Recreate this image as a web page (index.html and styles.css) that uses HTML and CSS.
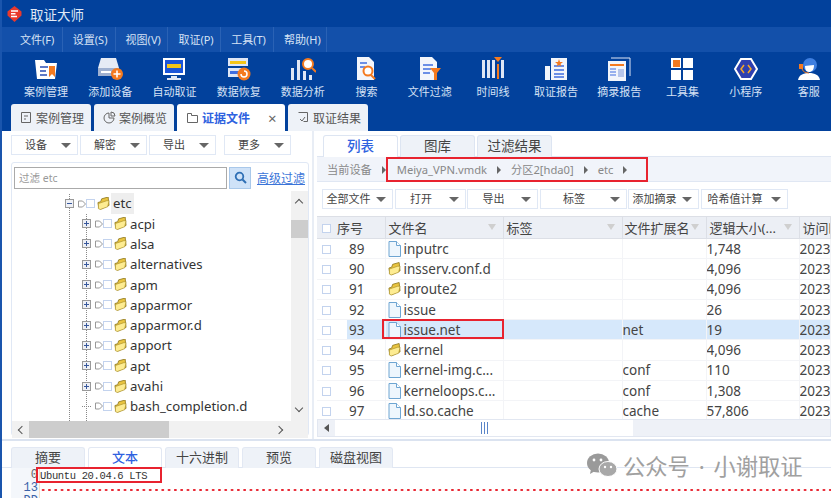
FILE: index.html
```html
<!DOCTYPE html>
<html lang="zh">
<head>
    <meta charset="UTF-8">
    <title>取证大师</title>
    <link rel="stylesheet" href="styles.css">
</head>
<body>
    <svg class="defs" width="0" height="0">
        <symbol id="folder" viewBox="0 0 14 14">
            <path d="M1 6l3-1 1-3 7-2 1 9-9 4-2-1z" fill="#e9c440" stroke="#8f7a22" stroke-width=".9"/>
            <path d="M1.500 7l9-3 2.500 0-1.500 6.500-8 3-2-1z" fill="#fdec92" stroke="#a88e28" stroke-width=".7"/>
        </symbol>
        <symbol id="file" viewBox="0 0 13 16">
            <path d="M1 .5h7.500l4 4v11h-11.500z" fill="#eef6fd" stroke="#6ea5d2"/>
            <path d="M8.500 .5v4h4" fill="#fff" stroke="#6ea5d2"/>
        </symbol>
        <symbol id="tag" viewBox="0 0 8 8">
            <path d="M.5 1h4l3 3-3 3h-4z" fill="#fff" stroke="#999"/>
        </symbol>
    </svg>

    <header class="titlebar">
        <svg class="logo" width="15" height="16" viewBox="0 0 15 16">
            <path d="M7.500 0l7 5.500v4l-7 6.500-7-6.500v-4z" fill="#e8392d"/>
            <path d="M4 5h7M4 7.800h4.500M4 10.500h6" stroke="#fff" stroke-width="1.400"/>
        </svg>
        <span>取证大师</span>
    </header>

    <nav class="menubar">
        <span class="menu-item">文件(F)</span>
        <span class="menu-item">设置(S)</span>
        <span class="menu-item">视图(V)</span>
        <span class="menu-item">取证(P)</span>
        <span class="menu-item">工具(T)</span>
        <span class="menu-item">帮助(H)</span>
    </nav>

    <div class="toolbar">
        <div class="tool">
            <svg width="26" height="24" viewBox="0 0 26 24"><path d="M2 3h9l2 3h11l-2 16H4z" fill="#fff"/><path d="M7 10h8M7 14h6M7 18h7" stroke="#2b4fb5" stroke-width="1.500"/><path d="M16 9h6v11l-3-3-3 3z" fill="#f47a1f"/></svg>
            <span>案例管理</span>
        </div>
        <div class="tool">
            <svg width="28" height="24" viewBox="0 0 28 24"><path d="M5 1h15l3 10H2z" fill="#e6ebf5"/><path d="M2 11h21v8H2z" fill="#9fb0d0"/><path d="M5 15h10" stroke="#fff" stroke-width="2"/><circle cx="21" cy="17" r="6" fill="#f47a1f"/><path d="M21 13.500v7M17.500 17h7" stroke="#fff" stroke-width="1.600"/></svg>
            <span>添加设备</span>
        </div>
        <div class="tool">
            <svg width="24" height="24" viewBox="0 0 24 24"><path d="M1 1h22v17H1z" fill="#fff"/><path d="M3 3h18v13H3z" fill="#1b55d8"/><path d="M5 7h14v4H5z" fill="#f5c518"/><path d="M9 19h6v2h4v2H5v-2h4z" fill="#dfe6f5"/></svg>
            <span>自动取证</span>
        </div>
        <div class="tool">
            <svg width="24" height="24" viewBox="0 0 24 24"><path d="M1 1h20v8H1zM1 11h14v9H1z" fill="#dfe6f5"/><path d="M3 4h16v3H3z" fill="#f5c518"/><path d="M3 14h9v3H3z" fill="#3f6de0"/><circle cx="17" cy="17" r="6.500" fill="#f47a1f"/><path d="M14 17a3 3 0 1 0 3-3" fill="none" stroke="#fff" stroke-width="1.500"/></svg>
            <span>数据恢复</span>
        </div>
        <div class="tool">
            <svg width="26" height="24" viewBox="0 0 26 24"><path d="M1 11h3v12H1zM7 3h3v20H7zM13 14h3v9h-3zM19 18h3v5h-3z" fill="#dfe6f5"/><circle cx="18" cy="7" r="5" fill="#fff" stroke="#f47a1f" stroke-width="2"/><path d="M22 11l4 4" stroke="#f47a1f" stroke-width="2"/></svg>
            <span>数据分析</span>
        </div>
        <div class="tool">
            <svg width="22" height="24" viewBox="0 0 22 24"><path d="M1 0h12l5 5v18H1z" fill="#f2f5fb"/><path d="M4 6h7M4 10h5" stroke="#3f6de0" stroke-width="1.500"/><circle cx="12" cy="14" r="4.500" fill="#fff" stroke="#f47a1f" stroke-width="2"/><path d="M15 18l4 4" stroke="#f47a1f" stroke-width="2"/></svg>
            <span>搜索</span>
        </div>
        <div class="tool">
            <svg width="24" height="24" viewBox="0 0 24 24"><path d="M2 0h12l5 5v18H2z" fill="#f2f5fb"/><path d="M5 8h10M5 12h8M5 16h7" stroke="#3f6de0" stroke-width="1.500"/><path d="M12 11h11l-4 5v7h-3v-7z" fill="#f47a1f"/></svg>
            <span>文件过滤</span>
        </div>
        <div class="tool">
            <svg width="24" height="24" viewBox="0 0 24 24"><path d="M1 3h3v18H1zM6 3h3v18H6zM11 3h3v18h-3zM20 3h3v18h-3z" fill="#dfe6f5"/><path d="M16 7h2v15h-2z" fill="#f47a1f"/><path d="M13 0h8l-4 5z" fill="#f47a1f"/></svg>
            <span>时间线</span>
        </div>
        <div class="tool">
            <svg width="24" height="24" viewBox="0 0 24 24"><path d="M7 1h16v22H7zM1 9h5v14H1z" fill="#f2f5fb"/><path d="M10 9h10M10 13h10M10 17h10M10 20h10" stroke="#3f6de0" stroke-width="1.300"/><path d="M15 2l1 3h3l-2.500 2 1 2.500-2.500-1.500-2.500 1.500 1-2.500L11 5h3z" fill="#f47a1f"/></svg>
            <span>取证报告</span>
        </div>
        <div class="tool">
            <svg width="24" height="24" viewBox="0 0 24 24"><path d="M1 4h18v20H1z" fill="#f2f5fb"/><path d="M4 1h19v18" fill="none" stroke="#dfe6f5"/><path d="M3 7h14v2H3z" fill="#f47a1f"/><path d="M3 12h6M3 15h6M3 18h6" stroke="#3f6de0"/><path d="M11 12h6v8h-6z" fill="#b7c6ea"/></svg>
            <span>摘录报告</span>
        </div>
        <div class="tool">
            <svg width="22" height="22" viewBox="0 0 22 22"><path d="M0 0h10v10H0z" fill="#fff"/><path d="M2 2h7v7H2z" fill="#f47a1f"/><path d="M12 0h10v10H12zM0 12h10v10H0zM12 12h10v10H12z" fill="#fff"/></svg>
            <span>工具集</span>
        </div>
        <div class="tool">
            <svg width="24" height="24" viewBox="0 0 24 24"><path d="M7 2h10l6 10-6 10H7L1 12z" fill="#2e3fb0" stroke="#fff" stroke-width="2"/><path d="M10 8l-3 4 3 4M14 8l3 4-3 4" fill="none" stroke="#f5a623" stroke-width="1.500"/></svg>
            <span>小程序</span>
        </div>
        <div class="tool">
            <svg width="24" height="24" viewBox="0 0 24 24"><circle cx="13" cy="8" r="7" fill="#3f7fe0"/><path d="M8 9c2 0 6-1 9-1 0 5-2 7-5 7s-4-3-4-6z" fill="#fff"/><path d="M1 23c1-5 5-7 11-7s10 2 11 7z" fill="#fff"/><path d="M2 7h4v5H2z" fill="#f47a1f"/><path d="M5 12c1 3 4 4 7 4" fill="none" stroke="#f47a1f"/></svg>
            <span>客服</span>
        </div>
    </div>

    <div class="main-tabs">
        <div class="main-tab"><svg width="13" height="13" viewBox="0 0 13 13"><path d="M1.500 1.500h9v10h-9zM4 5h4M4 8h2" fill="none" stroke="#666"/></svg>案例管理</div>
        <div class="main-tab"><svg width="13" height="13" viewBox="0 0 13 13"><path d="M6 2a5 5 0 1 0 5 5H6zM8 1v4h4a4 4 0 0 0-4-4z" fill="none" stroke="#666"/></svg>案例概览</div>
        <div class="main-tab main-tab-active"><svg width="13" height="13" viewBox="0 0 13 13"><path d="M1.500 2.500h4v2h6v7h-10z" fill="none" stroke="#666"/></svg><span>证据文件</span><i class="close">×</i></div>
        <div class="main-tab"><svg width="13" height="13" viewBox="0 0 13 13"><path d="M1.500 1.500h9v9h-4M3 8l2 2 3-4" fill="none" stroke="#666"/></svg>取证结果</div>
    </div>

    <div class="workspace">
        <section class="left-pane">
            <div class="btn-row">
                <div class="drop drop-wide">设备</div>
                <div class="drop drop-wide">解密</div>
                <div class="drop drop-wide">导出</div>
                <div class="drop drop-wide drop-gap">更多</div>
            </div>
            <div class="tree-panel">
                <div class="filter-row">
                    <div class="filter-input">过滤 etc</div>
                    <div class="filter-btn">
                        <svg width="13" height="13" viewBox="0 0 13 13"><circle cx="5.500" cy="5.500" r="3.800" fill="none" stroke="#2f6fb5" stroke-width="1.800"/><path d="M8.500 8.500l3.500 3.500" stroke="#2f6fb5" stroke-width="2"/></svg>
                    </div>
                    <a class="filter-link">高级过滤</a>
                </div>
                <div class="tree-wrap">
                    <div class="tree">
                        <div class="branch">
                            <div class="node node-root">
                                <i class="expander minus"></i><svg class="tag"><use href="#tag"/></svg><i class="check"></i><svg class="folder"><use href="#folder"/></svg><span class="node-label current">etc</span>
                            </div>
                            <div class="branch branch-inner">
                                <div class="node"><i class="expander"></i><svg class="tag"><use href="#tag"/></svg><i class="check"></i><svg class="folder"><use href="#folder"/></svg><span class="node-label">acpi</span></div>
                                <div class="node"><i class="expander"></i><svg class="tag"><use href="#tag"/></svg><i class="check"></i><svg class="folder"><use href="#folder"/></svg><span class="node-label">alsa</span></div>
                                <div class="node"><i class="expander"></i><svg class="tag"><use href="#tag"/></svg><i class="check"></i><svg class="folder"><use href="#folder"/></svg><span class="node-label">alternatives</span></div>
                                <div class="node"><i class="expander"></i><svg class="tag"><use href="#tag"/></svg><i class="check"></i><svg class="folder"><use href="#folder"/></svg><span class="node-label">apm</span></div>
                                <div class="node"><i class="expander"></i><svg class="tag"><use href="#tag"/></svg><i class="check"></i><svg class="folder"><use href="#folder"/></svg><span class="node-label">apparmor</span></div>
                                <div class="node"><i class="expander"></i><svg class="tag"><use href="#tag"/></svg><i class="check"></i><svg class="folder"><use href="#folder"/></svg><span class="node-label">apparmor.d</span></div>
                                <div class="node"><i class="expander"></i><svg class="tag"><use href="#tag"/></svg><i class="check"></i><svg class="folder"><use href="#folder"/></svg><span class="node-label">apport</span></div>
                                <div class="node"><i class="expander"></i><svg class="tag"><use href="#tag"/></svg><i class="check"></i><svg class="folder"><use href="#folder"/></svg><span class="node-label">apt</span></div>
                                <div class="node"><i class="expander"></i><svg class="tag"><use href="#tag"/></svg><i class="check"></i><svg class="folder"><use href="#folder"/></svg><span class="node-label">avahi</span></div>
                                <div class="node"><i class="connector"></i><svg class="tag"><use href="#tag"/></svg><i class="check"></i><svg class="folder"><use href="#folder"/></svg><span class="node-label">bash_completion.d</span></div>
                            </div>
                        </div>
                    </div>
                    <div class="vscroll">
                        <i class="chev chev-up"></i>
                        <i class="vthumb"></i>
                        <i class="chev chev-down"></i>
                    </div>
                </div>
                <div class="hscroll">
                    <i class="chev chev-left"></i><i class="hthumb"></i><i class="chev chev-right"></i>
                </div>
            </div>
        </section>

        <section class="right-pane">
            <div class="sub-tabs">
                <div class="sub-tab sub-tab-active">列表</div>
                <div class="sub-tab">图库</div>
                <div class="sub-tab">过滤结果</div>
            </div>
            <div class="crumbs">
                <span class="crumb crumb-first">当前设备</span>
                <span class="crumb">Meiya_VPN.vmdk</span>
                <span class="crumb">分区2[hda0]</span>
                <span class="crumb">etc</span>
                <div class="red-box crumb-mark"></div>
            </div>
            <div class="btn-row file-btns">
                <div class="drop w71">全部文件</div>
                <div class="drop w71">打开</div>
                <div class="drop w71">导出</div>
                <div class="drop w87">标签</div>
                <div class="drop w71">添加摘录</div>
                <div class="drop w87">哈希值计算</div>
            </div>
            <div class="table-wrap">
                <table class="files">
                    <colgroup>
                        <col class="c-check"><col class="c-no"><col class="c-name"><col class="c-tag"><col class="c-ext"><col class="c-size"><col class="c-time">
                    </colgroup>
                    <thead>
                        <tr>
                            <th colspan="2" class="no-head"><i class="check"></i>序号</th>
                            <th>文件名<em></em></th>
                            <th>标签<em></em></th>
                            <th>文件扩展名<em></em></th>
                            <th>逻辑大小(...<em></em></th>
                            <th>访问时间</th>
                        </tr>
                    </thead>
                    <tbody>
                        <tr><td><i class="check"></i></td><td class="no">89</td><td><svg class="file"><use href="#file"/></svg>inputrc</td><td></td><td></td><td>1,748</td><td>2023</td></tr>
                        <tr><td><i class="check"></i></td><td class="no">90</td><td><svg class="file"><use href="#folder"/></svg>insserv.conf.d</td><td></td><td></td><td>4,096</td><td>2023</td></tr>
                        <tr><td><i class="check"></i></td><td class="no">91</td><td><svg class="file"><use href="#folder"/></svg>iproute2</td><td></td><td></td><td>4,096</td><td>2023</td></tr>
                        <tr><td><i class="check"></i></td><td class="no">92</td><td><svg class="file"><use href="#file"/></svg>issue</td><td></td><td></td><td>26</td><td>2023</td></tr>
                        <tr class="selected"><td><i class="check"></i></td><td class="no">93</td><td class="marked"><svg class="file"><use href="#file"/></svg>issue.net<div class="red-box name-mark"></div></td><td></td><td>net</td><td>19</td><td>2023</td></tr>
                        <tr><td><i class="check"></i></td><td class="no">94</td><td><svg class="file"><use href="#folder"/></svg>kernel</td><td></td><td></td><td>4,096</td><td>2023</td></tr>
                        <tr><td><i class="check"></i></td><td class="no">95</td><td><svg class="file"><use href="#file"/></svg>kernel-img.c...</td><td></td><td>conf</td><td>110</td><td>2023</td></tr>
                        <tr><td><i class="check"></i></td><td class="no">96</td><td><svg class="file"><use href="#file"/></svg>kerneloops.c...</td><td></td><td>conf</td><td>1,308</td><td>2023</td></tr>
                        <tr><td><i class="check"></i></td><td class="no">97</td><td><svg class="file"><use href="#file"/></svg>ld.so.cache</td><td></td><td>cache</td><td>57,806</td><td>2023</td></tr>
                    </tbody>
                </table>
            </div>
            <div class="table-scroll">
                <b class="left-arrow"></b>
                <div class="table-thumb"><i class="grip"></i></div>
            </div>
        </section>
    </div>

    <div class="bottom-tabs">
        <div class="bottom-tab">摘要</div>
        <div class="bottom-tab bottom-tab-active">文本</div>
        <div class="bottom-tab">十六进制</div>
        <div class="bottom-tab">预览</div>
        <div class="bottom-tab">磁盘视图</div>
    </div>
    <div class="text-view">
        <div class="gutter"><span>0</span><span>13</span><span>DD</span></div>
        <div class="text-lines">
            <div class="text-line">Ubuntu 20.04.6 LTS<div class="red-box text-mark"></div></div>
            <div class="dots"></div>
        </div>
    </div>

    <div class="watermark">
        <svg width="30" height="25" viewBox="0 0 30 25">
            <ellipse cx="11" cy="10" rx="11" ry="9.500" fill="#9a9a9a"/>
            <path d="M4 16l-1 5 5-3z" fill="#9a9a9a"/>
            <ellipse cx="21" cy="16" rx="9" ry="7.500" fill="#a8a8a8" stroke="#fff"/>
            <circle cx="7" cy="7" r="1.400" fill="#fff"/><circle cx="14" cy="7" r="1.400" fill="#fff"/>
            <circle cx="18" cy="14" r="1.200" fill="#fff"/><circle cx="24" cy="14" r="1.200" fill="#fff"/>
        </svg>
        <span>公众号 · 小谢取证</span>
    </div>
</body>
</html>
```

FILE: styles.css
```css
* {
    box-sizing: border-box;
}
html, body {
    height: 498px;
}
body {
    margin: 0;
    overflow: hidden;
    position: relative;
    background: #fff;
    border-left: 2px solid #1a55ad;
    font-family: "Noto Sans", "Noto Sans CJK SC", sans-serif;
    color: #444;
}
i, em {
    font-style: normal;
}
.defs {
    position: absolute;
}

/* barres du haut */
.titlebar {
    height: 27px;
    margin-left: -2px;
    padding-left: 7px;
    background: #02419c;
    color: #dfe8f6;
    font-size: 13.500px;
    display: flex;
    align-items: center;
    gap: 8px;
}
.menubar {
    height: 25px;
    margin-left: -2px;
    padding-left: 10px;
    background: #1350aa;
    display: flex;
}
.menu-item {
    width: 52.800px;
    padding-left: 10px;
    font-size: 11px;
    line-height: 25px;
    color: #d6e2f5;
    border-right: 1px solid #2a62b5;
    white-space: nowrap;
}
.toolbar {
    height: 52px;
    margin-left: -2px;
    padding: 5px 0 0 14px;
    background: #02419c;
    display: grid;
    grid-template-columns: repeat(5, 64.200px) repeat(8, 63.200px);
}
.tool {
    display: flex;
    flex-direction: column;
    align-items: center;
}
.tool svg {
    height: 24px;
}
.tool span {
    margin-top: 2px;
    font-size: 11px;
    color: #d6e2f5;
    white-space: nowrap;
}
.main-tabs {
    height: 27px;
    margin-left: -2px;
    padding-left: 11px;
    background: #02419c;
    display: flex;
    gap: 3px;
}
.main-tab {
    width: 80px;
    background: #eef2f8;
    border-radius: 3px 3px 0 0;
    font-size: 12px;
    color: #555;
    display: flex;
    align-items: center;
    padding-left: 9px;
    gap: 3px;
}
.main-tab-active {
    width: 108px;
    background: #fff;
    color: #2f62e0;
    font-weight: 700;
}
.close {
    margin-left: 15px;
    font-size: 15px;
    font-weight: 400;
    color: #666;
}

/* zone de travail */
.workspace {
    height: 310px;
    display: flex;
    border-bottom: 2px solid #dbe3f0;
}
.left-pane {
    width: 312px;
    padding: 4px 0 0 9px;
    border-right: 2px solid #e8edf5;
}
.btn-row {
    display: flex;
    gap: 2px;
}
.drop {
    position: relative;
    height: 20px;
    background: #fff;
    border: 1px solid #e0e8f5;
    font-size: 11px;
    line-height: 18px;
    color: #444;
    text-align: center;
    padding-right: 17px;
    white-space: nowrap;
}
.drop::after {
    content: "";
    position: absolute;
    right: 6px;
    top: 7px;
    border-left: 5px solid transparent;
    border-right: 5px solid transparent;
    border-top: 5px solid #666;
}
.drop-wide {
    width: 67px;
}
.drop-gap {
    margin-left: 6px;
}
.tree-panel {
    width: 298px;
    height: 274px;
    margin-top: 7px;
    border: 1px solid #e0e8f5;
    border-radius: 3px;
    padding-top: 3px;
}
.filter-row {
    display: flex;
    align-items: center;
    padding-left: 2px;
    height: 23px;
}
.filter-input {
    width: 213px;
    height: 22px;
    border: 1px solid #aaa;
    padding-left: 4px;
    font-size: 10.500px;
    line-height: 20px;
    color: #999;
}
.filter-btn {
    width: 22px;
    height: 22px;
    margin-left: 2px;
    background: #cfe2f8;
    border: 1px solid #a9c8ea;
    display: flex;
    align-items: center;
    justify-content: center;
}
.filter-link {
    margin-left: 6px;
    font-size: 12px;
    color: #3b74d8;
    text-decoration: underline;
}
.tree-wrap {
    height: 230px;
    margin-top: 2px;
    display: flex;
}
.tree {
    width: 280px;
    overflow: hidden;
    padding: 2.500px 0 0 57px;
}
.branch {
    border-left: 1px dotted #888;
    height: 100%;
}
.branch-inner {
    margin-left: 16px;
}
.node {
    height: 20.300px;
    display: flex;
    align-items: center;
    font-size: 13.200px;
    color: #333;
    white-space: nowrap;
    margin-left: -5px;
}
.node-root {
    height: 20px;
}
.expander {
    position: relative;
    flex: none;
    width: 9px;
    height: 9px;
    background: #eef0f5;
    border: 1px solid #999;
}
.expander::before {
    content: "";
    position: absolute;
    left: 1px;
    right: 1px;
    top: 3px;
    height: 1px;
    background: #38589c;
}
.expander::after {
    content: "";
    position: absolute;
    top: 1px;
    bottom: 1px;
    left: 3px;
    width: 1px;
    background: #38589c;
}
.minus::after {
    display: none;
}
.connector {
    flex: none;
    width: 9px;
    border-top: 1px dotted #888;
}
.tag {
    flex: none;
    width: 8px;
    height: 8px;
    margin-left: 4px;
}
.check {
    display: inline-block;
    flex: none;
    width: 9px;
    height: 9px;
    background: #fff;
    border: 1px solid #c3d3ee;
}
.folder {
    flex: none;
    width: 13px;
    height: 13px;
    margin-left: 2px;
}
.node-label {
    margin-left: 1px;
    padding: 0 2px;
}
.current {
    background: #eee;
    line-height: 21px;
}
.vscroll {
    position: relative;
    width: 17px;
    background: #f1f1f1;
}
.chev {
    display: block;
    width: 6px;
    height: 6px;
    border-left: 1.500px solid #555;
    border-top: 1.500px solid #555;
}
.chev-up {
    position: absolute;
    left: 5px;
    top: 9px;
    transform: rotate(45deg);
}
.chev-down {
    position: absolute;
    left: 5px;
    bottom: 10px;
    transform: rotate(225deg);
}
.chev-left {
    margin: 0 4px 0 7px;
    transform: rotate(-45deg);
}
.chev-right {
    margin-left: 107px;
    transform: rotate(135deg);
}
.vthumb {
    position: absolute;
    left: 0;
    right: 0;
    top: 29px;
    height: 18px;
    background: #cdcdcd;
}
.hscroll {
    height: 17px;
    background: #f1f1f1;
    display: flex;
    align-items: center;
}
.hthumb {
    width: 140px;
    height: 17px;
    background: #cdcdcd;
}

/* partie droite */
.right-pane {
    flex: 1;
    min-width: 0;
    padding-left: 3px;
    position: relative;
}
.sub-tabs {
    height: 26px;
    padding: 4px 0 0 6px;
    display: flex;
    gap: 2px;
    border-bottom: 1px solid #dfe6f2;
}
.sub-tab {
    width: 75px;
    height: 22px;
    background: #eef2f8;
    border: 1px solid #dde5f2;
    border-bottom: 0;
    border-radius: 3px 3px 0 0;
    font-size: 13.500px;
    line-height: 20px;
    text-align: center;
}
.sub-tab-active {
    background: #fff;
    color: #2f62e0;
    font-weight: 500;
    height: 23px;
}
.crumbs {
    position: relative;
    height: 25px;
    background: #f1f4fa;
    display: flex;
    align-items: center;
    padding-left: 10px;
    font-size: 11.200px;
    color: #888;
    border-bottom: 1px solid #e0e7f3;
}
.crumb {
    white-space: nowrap;
}
.crumb::after {
    content: "";
    display: inline-block;
    margin: 0 10px;
    border-left: 4px solid #666;
    border-top: 4px solid transparent;
    border-bottom: 4px solid transparent;
}
.crumb-first::after {
    margin-right: 11px;
}
.red-box {
    position: absolute;
    border: 2px solid #e8232f;
    pointer-events: none;
}
.crumb-mark {
    left: 69px;
    top: 0;
    width: 262px;
    height: 25px;
}
.file-btns {
    gap: 1.500px;
    padding: 7px 0 0 5px;
    height: 34px;
}
.file-btns .drop {
    padding-right: 18px;
}
.w71 {
    width: 71px;
}
.w87 {
    width: 87px;
}
.table-wrap {
    height: 203px;
    overflow: hidden;
}
.files {
    table-layout: fixed;
    width: 514px;
    border-collapse: collapse;
    font-size: 13.500px;
    color: #444;
}
.c-check {
    width: 30px;
}
.c-no {
    width: 38px;
}
.c-name {
    width: 118px;
}
.c-tag {
    width: 119px;
}
.c-ext {
    width: 84px;
}
.c-size {
    width: 93px;
}
.files th {
    height: 22px;
    padding: 0 0 0 3px;
    background: #eceff5;
    border-right: 1px solid #dcdfe6;
    border-top: 1px solid #dcdfe6;
    border-bottom: 1px solid #dcdfe6;
    font-weight: 400;
    font-size: 13px;
    text-align: left;
    white-space: nowrap;
    position: relative;
    overflow: hidden;
}
.files th em {
    position: absolute;
    right: 7px;
    top: 7px;
    border-left: 4px solid transparent;
    border-right: 4px solid transparent;
    border-top: 6px solid #cfcfcf;
}
.files th:nth-child(4) {
    padding-left: 2px;
}
.files .no-head {
    padding-left: 5px;
}
.no-head .check {
    margin-right: 6px;
}
.files td {
    height: 20.300px;
    padding: 0;
    border-bottom: 1px solid #f3f4f7;
    border-right: 1px solid #f3f4f7;
    white-space: nowrap;
    overflow: hidden;
}
.files td:first-child {
    border-right: 0;
    padding-left: 5px;
}
.files td.no {
    padding-left: 2px;
}
.file {
    width: 13px;
    height: 16px;
    margin: 0 3px 0 2px;
    vertical-align: -3px;
}
.selected td:not(:first-child) {
    background: #d6e8fb;
}
.marked {
    position: relative;
}
.files td.marked {
    overflow: visible;
}
.name-mark {
    left: -4px;
    top: -1px;
    width: 122px;
    height: 20px;
}
.table-scroll {
    height: 18px;
    background: #eef1f7;
    border: 1px solid #e2e7f1;
    display: flex;
}
.left-arrow {
    width: 17px;
    position: relative;
}
.left-arrow::after {
    content: "";
    position: absolute;
    left: 6px;
    top: 4px;
    border-right: 5px solid #555;
    border-top: 4px solid transparent;
    border-bottom: 4px solid transparent;
}
.table-thumb {
    width: 298px;
    background: #fff;
    display: flex;
    align-items: center;
    justify-content: center;
}
.grip {
    width: 7px;
    height: 12px;
    border-left: 1px solid #5a85c8;
    border-right: 1px solid #5a85c8;
    background: linear-gradient(#5a85c8, #5a85c8) center / 1px 100% no-repeat;
}

/* onglets du bas */
.bottom-tabs {
    height: 27px;
    padding: 6px 0 0 9px;
    display: flex;
    gap: 3px;
    border-bottom: 1px solid #dfe6f2;
}
.bottom-tab {
    width: 74px;
    height: 21px;
    background: #eef2f8;
    border: 1px solid #e2e8f3;
    border-bottom: 0;
    border-radius: 3px 3px 0 0;
    font-size: 13px;
    line-height: 18px;
    text-align: center;
}
.bottom-tab-active {
    background: #fff;
    color: #2f62e0;
    font-weight: 500;
}
.text-view {
    display: flex;
    height: 40px;
    margin-left: 9px;
}
.gutter {
    width: 29px;
    padding: 1px 1px 0 0;
    background: #f4f7fb;
    display: flex;
    flex-direction: column;
    align-items: flex-end;
    border-right: 1px solid #f5dfc8;
    font-family: "Liberation Mono", monospace;
    font-size: 12px;
    line-height: 13px;
    color: #3a62a8;
}
.gutter span:first-child {
    color: #666;
}
.text-lines {
    flex: 1;
}
.text-line {
    position: relative;
    font-family: "Liberation Mono", monospace;
    font-size: 10.500px;
    letter-spacing: -.35px;
    line-height: 14px;
    padding-top: 1px;
    color: #333;
}
.text-mark {
    left: -4px;
    top: -1px;
    width: 126px;
    height: 16px;
}
.dots {
    height: 2px;
    margin-top: 6px;
    background: radial-gradient(circle, #e8232f 0 1px, transparent 1.200px) 0 0 / 6.300px 2px repeat-x;
}

.watermark {
    position: absolute;
    left: 585px;
    top: 449px;
    display: flex;
    align-items: center;
    gap: 6px;
    font-size: 22.300px;
    word-spacing: 3px;
    color: #a0a0a0;
    white-space: nowrap;
}
```
